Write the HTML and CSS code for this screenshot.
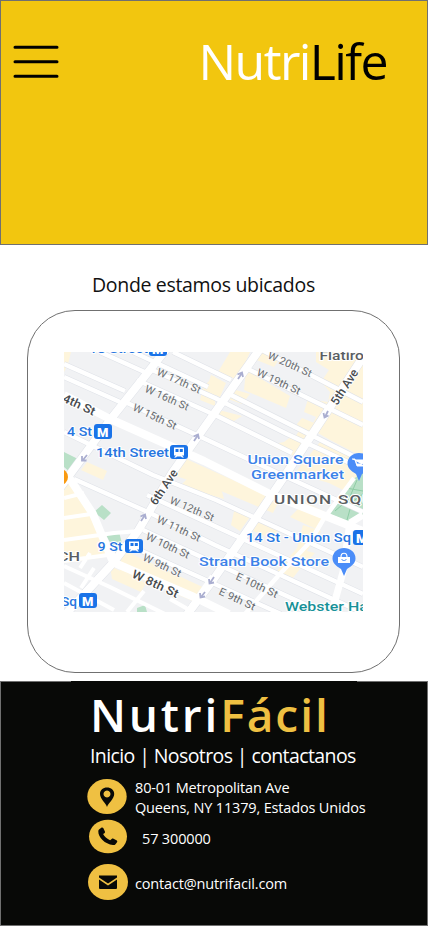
FILE: index.html
```html
<!DOCTYPE html>
<html lang="es">
<head>
<meta charset="utf-8">
<title>NutriLife</title>
<link rel="stylesheet" href="styles.css">
</head>
<body>
<header class="header">
  <svg class="menu" viewBox="0 0 46 34" width="46" height="34"><path d="M2 2.3H44M2 16.8H44M2 31.3H44"/></svg>
  <h1 class="brand"><span class="brand-light">Nutri</span><span class="brand-dark">Life</span></h1>
</header>
<main class="main">
  <h2 class="title">Donde estamos ubicados</h2>
  <section class="card">
    <svg class="map" viewBox="64 352 299 260" width="299" height="260">
      <rect x="64" y="352" width="299" height="260" fill="#f1f2f4"/>
      <g fill="#fef5dc">
        <path d="M64 352h7l-3 12-4 8zM230 352h20l-12 28-20-8zM211 375l15 8-6 14-14-6zM212 378l3-2v30l-15-6 3-13zM258 352h12l10 6-6 9-20-8zM316 352h47v105l-33-17-19-11 5-12-12-5 4-13 20 3 2-10-9-10 8-12-13-8zM246 370l44 26-4 12-42-18zM229 388l21 6-8 10-14-5zM219 410l23 6-8 5-17-3zM302 418l17 7-16 23-12-5 8-12-2-7zM292 436l13 7-8 14-18-7-9-5 14-3z"/>
        <path d="M184 458l95 43-6 12-52-22-48-16zM87 462l20 9-4 9-22-10zM320 442l43 18v40l-34-17-34-10zM235 507l17 7-12 17-9-6zM258 521l20 9-5 9-20-8zM305 502l22 11-11 16-26-12zM303 525l18 6-14 20 8 2-15 16-8 10-16-7 21-24z"/>
        <path d="M64 489l6-7 32 48 10 25-12 3-36 5zM121 549l88 41-9 14-80-33zM110 566l36 17-5 9-29-13z"/>
        <path d="M180 486l13-13 26 8 5 18z"/>
      </g>
      <g fill="#b9e0c7">
        <path d="M64 452l14 7-7 14-7-6zM94 512l8-7 9 8-7 7zM106 535l13-3 4 15-10 1zM137 608l8-3 2 7h-10z"/>
        <path d="M352 480l-22 34 22 9 11-6v-45z"/>
      </g>
      <path d="M341 497l20 8M346 488l17 3M335 511l14-12 8-19M347 520l5-18 11-8" fill="none" stroke="#8ecda5" stroke-width="1"/>
      <g fill="none" stroke="#dfe2e8" stroke-linejoin="round">
        <path stroke-width="5.6" d="M64 364l61 27M100 352l49 22M133 352l75 35M173 352l58 28M64 377l56 25M150 369l65 29 72 36 76 35M137 380l78 35 77 38M123 401l78 36 79 37 83 38M260 349l103 53M246 368l117 57M231 395l132 66M64 432l89 43 63 25 147 67M74 479l76 34 65 32 148 68M147 495l216 99M143 530l65 30 116 53M135 548l146 66"/>
        <path stroke-width="9" d="M168 347l-58 73-50 68M262 346L172 473l-34 58-26 33-48 52M369 348L286 474l-36 53-37 53-27 36"/>
      </g>
      <g fill="none" stroke="#fff" stroke-linejoin="round">
        <path stroke-width="4.4" d="M64 364l61 27M100 352l49 22M133 352l75 35M173 352l58 28M64 377l56 25M150 369l65 29 72 36 76 35M137 380l78 35 77 38M123 401l78 36 79 37 83 38M260 349l103 53M246 368l117 57M231 395l132 66M64 432l89 43 63 25 147 67M74 479l76 34 65 32 148 68M147 495l216 99M143 530l65 30 116 53M135 548l146 66"/>
        <path stroke-width="4" d="M64 498l20-5M64 518l27-4M64 540l50-7 25-2M64 561l51-7M64 566l46 21 59 29M80 568l10-15M81 588l13-20M144 591l-17 21M170 599l23 13M64 583l50 27M186 613l26-37"/>
        <path stroke-width="4.5" d="M354 478l-31 42-13 22-32 34-33 38"/>
        <path stroke-width="8" d="M64 395l46 24 94 42 66 33 93 37M68 476l25 38 20 48M110 561l84 36 35 17"/>
        <path stroke-width="8" d="M168 347l-58 73-50 68M262 346L172 473l-34 58-26 33-48 52M369 348L286 474l-36 53-37 53-27 36"/>
        <path stroke-width="7" d="M350 522l-7 50-12 43M350 523l13-8"/>
      </g>
      <g fill="none" stroke="#aaaed0" stroke-width="1.800">
        <path d="M238 379l4-6M237.500 374.500l4.500-2 1 4.500M194 441l4-6M193.500 436.500l4.500-2 1 4.500M141 521l4-6M140.500 516.500l4.500-2 1 4.500M328 411l-3 6M323.500 413l1 4.500 4-2M87 455l-4 5M82 456l0 4.500 4.500 0M214 577l-4 6M209 579l.500 4.500 4.500-1M205 592l-4 5M200 593l.500 4.500 4.500-1"/>
      </g>
      <g class="street">
        <text transform="translate(156 374.500) rotate(24)" textLength="47" lengthAdjust="spacingAndGlyphs">W 17th St</text>
        <text transform="translate(144 391.500) rotate(24)" textLength="47" lengthAdjust="spacingAndGlyphs">W 16th St</text>
        <text transform="translate(132 410) rotate(25)" textLength="47" lengthAdjust="spacingAndGlyphs">W 15th St</text>
        <text transform="translate(267 358) rotate(24)" textLength="47" lengthAdjust="spacingAndGlyphs">W 20th St</text>
        <text transform="translate(256 375) rotate(25)" textLength="47" lengthAdjust="spacingAndGlyphs">W 19th St</text>
        <text transform="translate(169 503) rotate(23)" textLength="47" lengthAdjust="spacingAndGlyphs">W 12th St</text>
        <text transform="translate(156 522) rotate(25)" textLength="47" lengthAdjust="spacingAndGlyphs">W 11th St</text>
        <text transform="translate(145 539) rotate(25)" textLength="47" lengthAdjust="spacingAndGlyphs">W 10th St</text>
        <text transform="translate(142 560) rotate(25)" textLength="41" lengthAdjust="spacingAndGlyphs">W 9th St</text>
        <text transform="translate(235 579) rotate(25)" textLength="45" lengthAdjust="spacingAndGlyphs">E 10th St</text>
        <text transform="translate(218 594) rotate(25)" textLength="39" lengthAdjust="spacingAndGlyphs">E 9th St</text>
      </g>
      <g class="major">
        <text transform="translate(131 577) rotate(25)" textLength="50" lengthAdjust="spacingAndGlyphs">W 8th St</text>
        <text transform="translate(55 398) rotate(25)" textLength="42" lengthAdjust="spacingAndGlyphs">14th St</text>
        <text transform="translate(156 506) rotate(-56)" textLength="40" lengthAdjust="spacingAndGlyphs">6th Ave</text>
        <text transform="translate(337 406) rotate(-57)" textLength="40" lengthAdjust="spacingAndGlyphs">5th Ave</text>
      </g>
      <g class="area">
        <text x="319.500" y="360" font-size="13.500" textLength="53" lengthAdjust="spacingAndGlyphs">Flatiron</text>
        <text class="wide" x="274" y="503.500" font-size="13.500" textLength="101" lengthAdjust="spacingAndGlyphs">UNION SQU</text>
        <text x="58" y="561" font-size="13.500" textLength="22" lengthAdjust="spacingAndGlyphs">CH</text>
      </g>
      <g class="transit">
        <text x="89" y="353" textLength="59" lengthAdjust="spacingAndGlyphs">18 Street</text>
        <text x="67" y="435.500" textLength="25" lengthAdjust="spacingAndGlyphs">4 St</text>
        <text x="96" y="457" textLength="73" lengthAdjust="spacingAndGlyphs">14th Street</text>
        <text x="97.500" y="551" textLength="25" lengthAdjust="spacingAndGlyphs">9 St</text>
        <text x="61" y="605.500" textLength="16" lengthAdjust="spacingAndGlyphs">Sq</text>
        <text x="246" y="541.500" textLength="105" lengthAdjust="spacingAndGlyphs">14 St - Union Sq</text>
      </g>
      <g class="place">
        <text x="247.500" y="464" textLength="96" lengthAdjust="spacingAndGlyphs">Union Square</text>
        <text x="251" y="479" textLength="93" lengthAdjust="spacingAndGlyphs">Greenmarket</text>
        <text x="199" y="566" textLength="130" lengthAdjust="spacingAndGlyphs">Strand Book Store</text>
      </g>
      <text class="venue" x="285" y="611" textLength="91" lengthAdjust="spacingAndGlyphs">Webster Hall</text>
      <g fill="#1a73e8">
        <rect x="149" y="341" width="18" height="15" rx="3"/><rect x="94" y="424" width="18" height="15" rx="3"/><rect x="170" y="445" width="18" height="14" rx="3"/><rect x="125" y="539" width="18" height="14" rx="3"/><rect x="79" y="593" width="18" height="15" rx="3"/><rect x="353" y="530" width="18" height="15" rx="3"/>
      </g>
      <g class="metro"><text x="152" y="353.500">M</text><text x="97" y="436.500">M</text><text x="82" y="605.500">M</text><text x="356" y="542.500">M</text></g>
      <g fill="#fff">
        <path fill-rule="evenodd" d="M174 447.500h10v8h-2l2 2h-2l-1-1h-4l-1 1h-2l2-2h-2zM175.500 449v3h3v-3zM179.800 449v3h3v-3z"/>
        <path fill-rule="evenodd" d="M129 541.500h10v8h-2l2 2h-2l-1-1h-4l-1 1h-2l2-2h-2zM130.500 543v3h3v-3zM134.800 543v3h3v-3z"/>
      </g>
      <path d="M344 576l-3-7c-5-3-8.500-6-8.500-10.500a11.500 10.500 0 0 1 23 0c0 4.500-3.500 7.500-8.500 10.500z" fill="#4b8df8"/>
      <path d="M359 481l-3-7c-5-3-8.500-6-8.500-10.500a11.500 10.500 0 0 1 23 0c0 4.500-3.500 7.500-8.500 10.500z" fill="#4b8df8"/>
      <path d="M338 557h12v6h-12z" fill="#fff"/><path d="M341 557c0-5 6-5 6 0" fill="none" stroke="#fff" stroke-width="1.200"/><path d="M341.500 559c1 2 4 2 5 0" fill="none" stroke="#4b8df8"/>
      <path d="M352 459h3l2 7h8M355.500 460h9l-2 4h-6z" fill="#fff" stroke="#fff"/>
      <circle cx="60" cy="477" r="8" fill="#f99a11"/>
    </svg>
  </section>
</main>
<footer class="footer">
  <div class="footer-logo"><span class="logo-white">Nutri</span><span class="logo-gold">Fácil</span></div>
  <nav class="nav">Inicio | Nosotros | contactanos</nav>
  <ul class="contacts">
    <li class="contact address">
      <svg width="42" height="37" viewBox="0 0 42 37"><ellipse cx="20" cy="18.500" rx="19.700" ry="17.500" fill="#efc042"/><path fill="#080907" fill-rule="evenodd" d="M20 29c-1-4-7-8-7-13 0-4 3-6.500 7-6.500s7.200 2.500 7.200 6.500c0 5-6 9-7.200 13zM20 12.500a3.500 3.500 0 1 0 .01 0z"/></svg>
      <p>80-01 Metropolitan Ave<br>Queens, NY 11379, Estados Unidos</p>
    </li>
    <li class="contact phone">
      <svg width="42" height="35" viewBox="0 0 42 35"><ellipse cx="21" cy="17.500" rx="19" ry="16.800" fill="#efc042"/><path fill="#080907" d="M12 10.500l2.300-1.800c.7-.5 1.700-.3 2.100.5l1.500 3.300c.3.600.1 1.300-.5 1.700l-1.300.9c1 2.400 4 5 7 6.200l1.600-1.400c.5-.5 1.200-.6 1.800-.2l3 1.500c.8.400 1 1.300.5 2l-1.500 2c-.5.700-1.500 1-2.500.9-8-.9-15-7.500-14.700-14 .1-.7.200-1.200.7-1.600z"/></svg>
      <p>57 300000</p>
    </li>
    <li class="contact mail">
      <svg width="42" height="38" viewBox="0 0 42 38"><ellipse cx="21" cy="19" rx="20" ry="18" fill="#efc042"/><path fill="#080907" d="M12 12.500h18v2l-9 6-9-6zM12 16.500l9 6 9-6v8.500q0 1-1 1h-16q-1 0-1-1z"/></svg>
      <p>contact@nutrifacil.com</p>
    </li>
  </ul>
</footer>
</body>
</html>
```
FILE: styles.css
```css
* { box-sizing: border-box; margin: 0; padding: 0; }
body { width: 428px; height: 926px; display: flex; flex-direction: column; background: #fff; font-family: "Open Sans", "Noto Sans", sans-serif; overflow: hidden; }
.header { height: 245px; display: flex; justify-content: space-between; align-items: flex-start; padding: 44px 40px 0 12px; background: #f2c60f; border: 1px solid #707070; }
.menu { fill: none; stroke: #000; stroke-width: 3; stroke-linecap: round; }
.brand { display: flex; margin-top: -18px; font-size: 50px; line-height: 68px; font-weight: 400; letter-spacing: -1.600px; }
.brand-light { color: #fff; }
.brand-dark { color: #000; }
.main { height: 436px; display: flex; flex-direction: column; }
.title { margin: 26px 0 0 92px; height: 28px; font-size: 19.500px; line-height: 28px; font-weight: 400; letter-spacing: -0.320px; color: #111; white-space: nowrap; }
.card { width: 373px; height: 363px; margin: 11px 0 0 27px; padding: 41px 36px 0; border: 1px solid #707070; border-radius: 48px; }
.map { display: block; font-family: Roboto, sans-serif; }
.map text { paint-order: stroke; stroke: #fff; stroke-width: 2px; stroke-linejoin: round; }
.map .street text { font-size: 10.500px; fill: #686c70; stroke: #f6f7f8; stroke-width: 1.500px; }
.major { font-size: 12px; font-weight: 500; fill: #484b4e; }
.area { font-weight: 500; fill: #5a5e62; }
.area .wide { letter-spacing: 1px; }
.transit { font-size: 13.500px; fill: #2776df; }
.place { font-size: 13.500px; fill: #3c82e8; }
.transit, .place { font-weight: 500; }
.venue { font-size: 13.500px; font-weight: 500; fill: #179198; }
.map .metro text { font-size: 13px; font-weight: 900; fill: #fff; stroke: none; }
.footer { height: 245px; background: #080907; border: 1px solid #707070; color: #fff; }
.footer::before { content: ""; display: block; width: 286px; height: 1px; margin: -1px 0 0 70px; background: #080907; }
.footer-logo { display: flex; height: 60px; margin-left: 89px; font-size: 46px; line-height: 64px; font-weight: 600; }
.logo-white { letter-spacing: 2.800px; }
.logo-gold { letter-spacing: 2px; color: #efc042; }
.nav { height: 28px; margin-left: 89px; font-size: 19.500px; line-height: 28px; letter-spacing: -0.600px; white-space: nowrap; }
.contacts { list-style: none; margin-left: 86px; }
.contact { display: flex; align-items: center; font-size: 14.500px; line-height: 20px; letter-spacing: -0.160px; white-space: nowrap; }
.contact p { margin-top: 3px; }
.address { height: 40px; margin-top: 6px; gap: 6px; }
.phone { height: 35px; margin-top: 3px; gap: 13px; }
.phone p { margin-top: 4px; }
.mail { height: 38px; margin-top: 9px; gap: 6px; }
.mail p { margin-top: 4px; }
```
